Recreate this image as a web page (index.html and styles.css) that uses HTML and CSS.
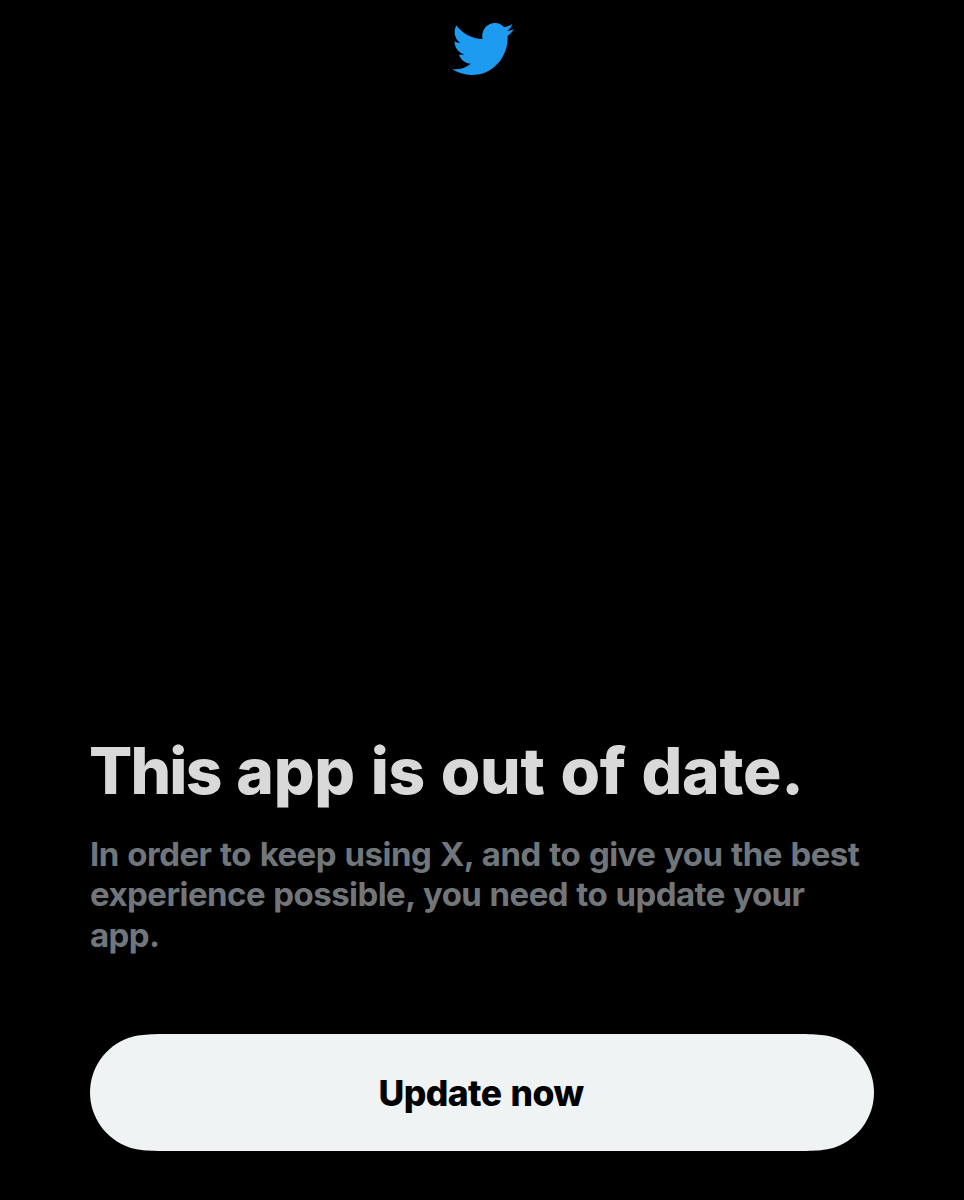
FILE: index.html
```html
<!DOCTYPE html>
<html lang="en">
<head>
<meta charset="utf-8">
<title>Update required</title>
<link rel="stylesheet" href="styles.css">
</head>
<body>
<main class="screen">
  <header class="header">
    <svg class="logo" viewBox="0.93 2.75 22.72 18.46" preserveAspectRatio="none" aria-label="Twitter"><path d="M23.643 4.937c-.835.37-1.732.62-2.675.733.962-.576 1.7-1.49 2.048-2.578-.9.534-1.897.922-2.958 1.13-.85-.904-2.06-1.47-3.4-1.47-2.572 0-4.658 2.086-4.658 4.66 0 .364.042.718.12 1.06-3.873-.195-7.304-2.05-9.602-4.868-.4.69-.63 1.49-.63 2.342 0 1.616.823 3.043 2.072 3.878-.764-.025-1.482-.234-2.11-.583v.06c0 2.257 1.605 4.14 3.737 4.568-.392.106-.803.162-1.227.162-.3 0-.593-.028-.877-.082.593 1.85 2.313 3.198 4.352 3.234-1.595 1.25-3.604 1.995-5.786 1.995-.376 0-.747-.022-1.112-.065 2.062 1.323 4.51 2.093 7.14 2.093 8.57 0 13.255-7.098 13.255-13.254 0-.2-.005-.402-.014-.602.91-.658 1.7-1.477 2.323-2.41z"/></svg>
  </header>
  <section class="content">
    <h1 class="title"><span class="title-lead">This</span> app is out of date.</h1>
    <p class="message"><span class="message-lead">In order to keep using X, and to give you the best</span><br>experience possible, you need to update your<br>app.</p>
    <button class="update" type="button">
      <svg class="update-shape" viewBox="0 0 784 116.5" preserveAspectRatio="none" aria-hidden="true"><path d="M88.7 0C63 0 50.4 0 38.8 3.8C15.5 12 0 34 0 58.25C0 82.5 15.5 104.5 38.8 112.7C50.4 116.5 63 116.5 88.7 116.5H695.3C721 116.5 733.6 116.5 745.2 112.7C768.5 104.5 784 82.5 784 58.25C784 34 768.5 12 745.2 3.8C733.6 0 721 0 695.3 0Z"/></svg>
      <span class="update-label">Update now</span>
    </button>
  </section>
</main>
</body>
</html>
```
FILE: styles.css
```css
* { box-sizing: border-box; }
body { margin: 0; background: #000; font-family: Inter, "Liberation Sans", sans-serif; }
.screen { height: 1200px; display: flex; flex-direction: column; justify-content: space-between; padding: 23px 90px 49px; overflow: hidden; }
.header { display: flex; justify-content: center; padding-left: 2px; }
.logo { display: block; width: 62px; height: 52px; fill: #1d9bf0; }
.content { display: flex; flex-direction: column; }
.title { margin: 0 0 0 -1px; font-size: 64px; line-height: 78px; font-weight: 800; letter-spacing: -0.25px; word-spacing: 2px; color: #d9d9d9; white-space: nowrap; }
.title-lead { letter-spacing: -1.8px; }
.message { margin: 24px 0 0; font-size: 33px; line-height: 40.5px; font-weight: 700; letter-spacing: -0.55px; word-spacing: 1px; color: #71767b; white-space: nowrap; }
.message-lead { word-spacing: 1.4px; }
.update { position: relative; width: 784px; height: 117px; margin: 79px 0 0; padding: 0; border: 0; background: none; font: inherit; display: grid; place-items: center; }
.update-shape { position: absolute; left: 0; top: 0; width: 784px; height: 117px; fill: #eff3f4; }
.update-label { position: relative; font-size: 35.5px; line-height: 44px; padding: 2px 2px 0 0; font-weight: 800; letter-spacing: -0.6px; word-spacing: 2px; color: #000; }
```
